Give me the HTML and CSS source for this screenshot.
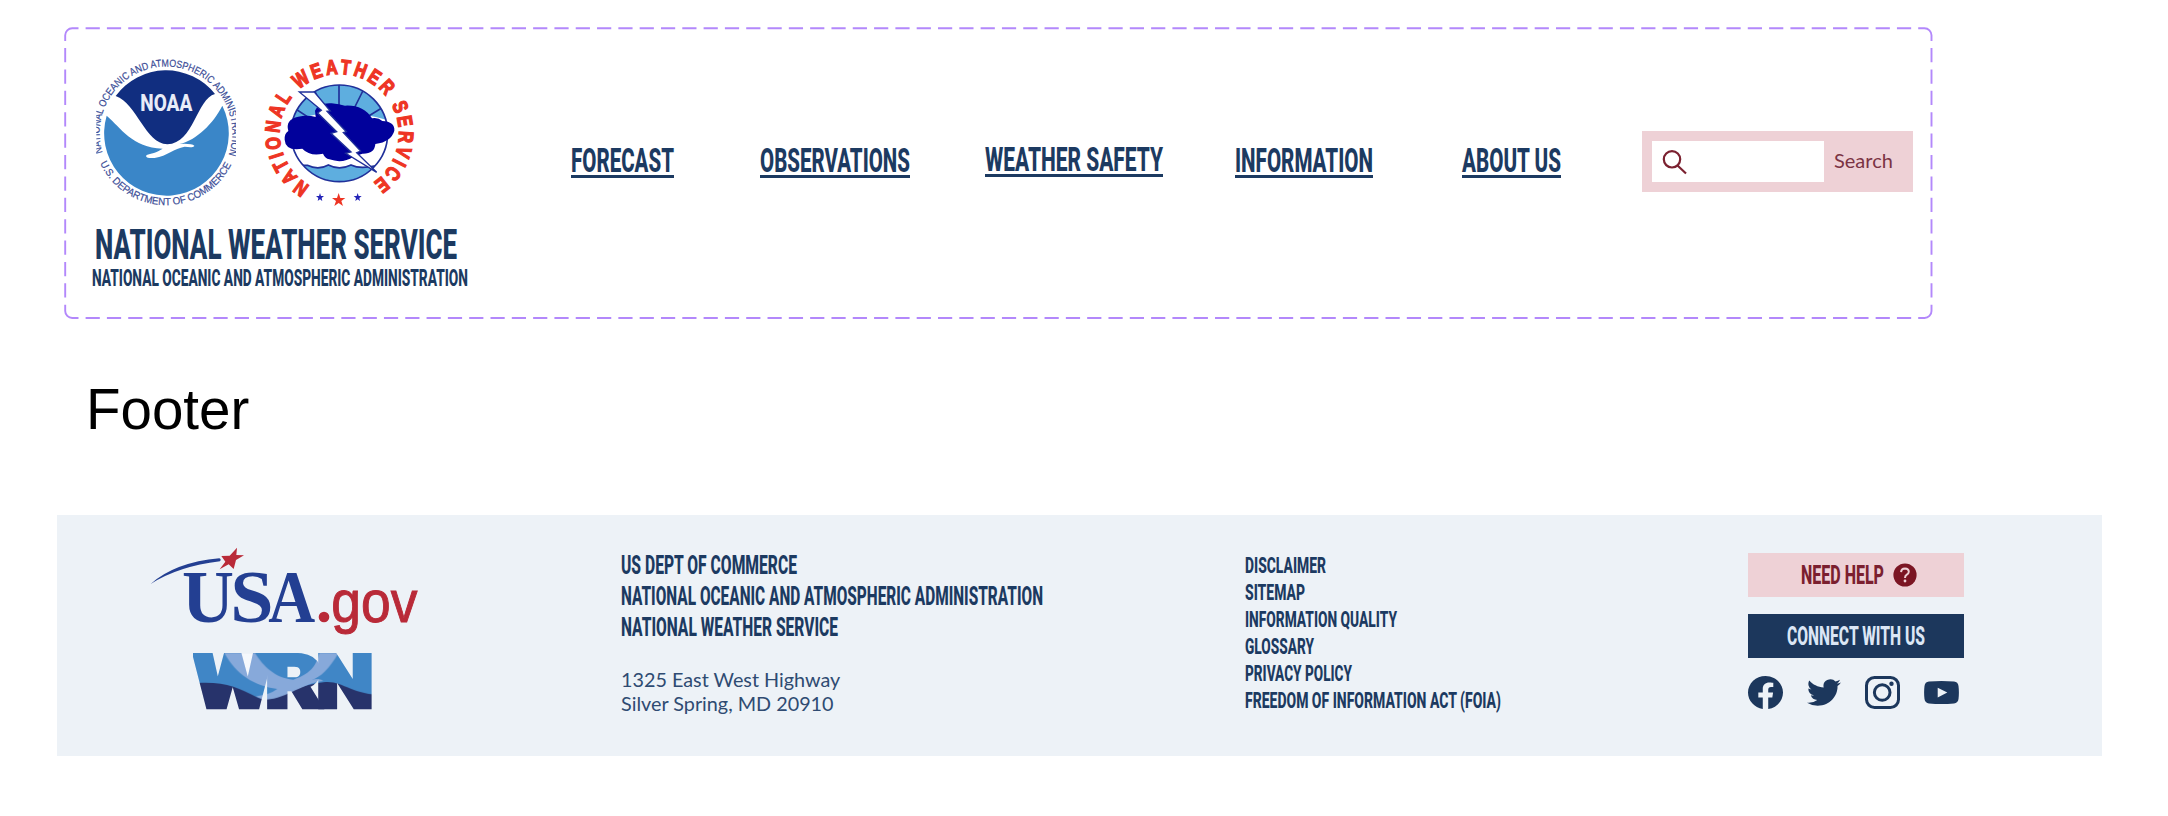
FILE: index.html
```html
<!DOCTYPE html>
<html lang="en">
<head>
<meta charset="utf-8">
<title>National Weather Service</title>
<link rel="stylesheet" href="styles.css">
</head>
<body>
<header class="header">
  <svg class="frame" width="1870" height="293" viewBox="63.5 27 1870 293" aria-hidden="true">
    <path d="M64.7 41V35.3a7 7 0 0 1 7-7H78M1917.7 28.3h6.3a7 7 0 0 1 7 7V41M1931 304.7v6.3a7 7 0 0 1-7 7h-6.3M78 318h-6.3a7 7 0 0 1-7-7v-6.3"/>
    <path stroke-dasharray="14.21 7.1" d="M85.1 28.3H1910.7M85.1 318H1910.7"/>
    <path stroke-dasharray="14.25 7.13" d="M64.7 48.1V297.6M1931 48.1V297.6"/>
  </svg>
  <div class="brand">
    <div class="logos">
      <svg class="noaa" width="146" height="154" viewBox="132 108 438 462" role="img" aria-label="NOAA">
        <defs>
          <path id="noaaTop" d="M158 398A199 199 0 1 1 538 398"/>
          <path id="noaaBottom" d="M150 430A219 219 0 0 0 546 430"/>
          <clipPath id="noaaClip"><rect x="139" y="100" width="419" height="480"/></clipPath>
        </defs>
        <path fill="#112e80" d="M197 228A187 187 0 0 1 495 222C440 236 432 370 352 373C285 370 262 252 197 228Z"/>
        <path fill="#3a86c8" d="M170 287C215 325 245 382 338 386C320 398 302 401 290 405C284 412 294 415 314 414C352 408 372 385 404 380Q432 384 433 377Q425 370 389 372C440 360 490 310 517 257A187 187 0 1 1 170 287Z"/>
        <text class="noaa-name" x="271" y="272" textLength="156" lengthAdjust="spacingAndGlyphs">NOAA</text>
        <g class="noaa-ring" clip-path="url(#noaaClip)">
          <text><textPath href="#noaaTop" textLength="752" lengthAdjust="spacingAndGlyphs">NATIONAL OCEANIC AND ATMOSPHERIC ADMINISTRATION</textPath></text>
          <text><textPath href="#noaaBottom" textLength="490" lengthAdjust="spacingAndGlyphs">U.S. DEPARTMENT OF COMMERCE</textPath></text>
        </g>
      </svg>
      <svg class="nws" width="156" height="154" viewBox="36 48 468 462" role="img" aria-label="National Weather Service">
        <defs>
          <path id="nwsRing" d="M180 437A179 179 0 1 1 356 437"/>
          <clipPath id="nwsDisc"><circle cx="268" cy="280" r="145"/></clipPath>
        </defs>
        <circle cx="268" cy="280" r="145" fill="#fff"/>
        <g clip-path="url(#nwsDisc)" stroke="#20309a" stroke-width="5">
          <path fill="#5eaedf" d="M110 130H430V243H110Z" stroke="none"/>
          <path fill="none" d="M267 130V210M340 150L310 210M394 205L350 232M195 155L220 210M137 207L180 235"/>
          <path fill="#fff" d="M110 246Q268 190 430 246V400H110Z" stroke="none"/>
          <path fill="#5eaedf" d="M140 376Q160 376 172 376Q205 392 235 375Q268 392 303 375Q330 388 372 378L430 376V440H110Z"/>
        </g>
        <circle cx="268" cy="280" r="145" fill="none" stroke="#20309a" stroke-width="5"/>
        <path fill="#01019b" d="M195 212Q202 188 245 190Q268 193 285 197Q340 194 366 235Q385 232 397 243Q435 245 433 272Q424 305 376 312Q374 342 337 341Q324 345 310 350Q278 372 238 358Q225 355 219 341Q180 350 157 326Q106 334 104 299Q103 280 115 273Q105 238 145 230Q172 224 197 231Z"/>
        <path fill="#fff" stroke="#20309a" stroke-width="4" d="M148 156H193L241 213L231 214L289 275L280 278L332 333L320 338L380 397L287 340L303 336L243 280L260 275L203 219L214 211Z"/>
        <text class="nws-ring"><textPath href="#nwsRing" textLength="932" lengthAdjust="spacingAndGlyphs">NATIONAL WEATHER SERVICE</textPath></text>
        <path fill="#ee3524" d="M266 459L271 474L286 474L274 483L279 498L266 489L253 498L258 483L246 474L261 474Z"/>
        <path fill="#2424b8" d="M210 459L213 468L222 468L215 474L217 483L210 478L203 483L205 474L198 468L207 468ZM323 459L326 468L335 468L328 474L330 483L323 478L316 483L318 474L311 468L320 468Z"/>
      </svg>
    </div>
    <svg class="cond title" width="364" height="35"><text x="3" y="34" textLength="362" lengthAdjust="spacingAndGlyphs">NATIONAL WEATHER SERVICE</text></svg>
    <svg class="cond subtitle" width="377" height="27"><text y="26" textLength="376" lengthAdjust="spacingAndGlyphs">NATIONAL OCEANIC AND ATMOSPHERIC ADMINISTRATION</text></svg>
  </div>
  <nav class="nav">
    <a><svg class="cond" width="103" height="24"><text y="24" textLength="103" lengthAdjust="spacingAndGlyphs">FORECAST</text></svg></a>
    <a><svg class="cond" width="150" height="24"><text y="24" textLength="150" lengthAdjust="spacingAndGlyphs">OBSERVATIONS</text></svg></a>
    <a class="raised"><svg class="cond" width="178" height="24"><text y="24" textLength="178" lengthAdjust="spacingAndGlyphs">WEATHER SAFETY</text></svg></a>
    <a><svg class="cond" width="138" height="24"><text y="24" textLength="138" lengthAdjust="spacingAndGlyphs">INFORMATION</text></svg></a>
    <a><svg class="cond" width="99" height="24"><text y="24" textLength="99" lengthAdjust="spacingAndGlyphs">ABOUT US</text></svg></a>
  </nav>
  <div class="search">
    <div class="field"><svg width="26" height="25" viewBox="0 0 26 25" fill="none" stroke="#7b2130" stroke-width="2.2"><circle cx="10" cy="9.3" r="8.2"/><path d="M15.5 15.5L24 23.5"/></svg></div>
    <span>Search</span>
  </div>
</header>

<h1 class="heading">Footer</h1>

<footer class="footer">
  <div class="partners">
    <svg width="268" height="90" viewBox="330 142 804 270" role="img" aria-label="USA.gov">
      <path fill="#233f92" d="M332 253Q405 188 538 176Q545 179 540 185Q415 200 332 253Z"/>
      <path fill="#b92a38" d="M591 144L589 166L612 167L588 181L581 208L566 194L539 209L556 186L544 169L569 168Z"/>
      <g class="usa"><text x="426" y="367" textLength="156" lengthAdjust="spacingAndGlyphs">U</text><text x="571" y="367" textLength="130" lengthAdjust="spacingAndGlyphs">S</text><text x="685" y="367" textLength="141" lengthAdjust="spacingAndGlyphs">A</text></g>
      <circle cx="852" cy="352" r="16" fill="#b92a38"/>
      <text class="gov" x="874" y="366" textLength="258" lengthAdjust="spacingAndGlyphs">gov</text>
    </svg>
    <svg class="wrn" width="180" height="57" viewBox="459 460 540 171" role="img" aria-label="WRN">
      <defs>
        <pattern id="wave" patternUnits="userSpaceOnUse" x="440" y="440" width="600" height="220" viewBox="440 440 600 220">
          <path fill="#4086c6" d="M440 440H1040V660H440Z"/>
          <path fill="#27336b" d="M440 553C540 540 590 560 650 592C690 612 750 560 850 548C910 540 930 588 1040 586V660H440Z"/>
          <path fill="#87a9da" d="M553 460H645C670 500 705 535 760 540C820 520 830 490 838 460H895C870 505 840 535 815 540Q840 535 850 544C790 550 740 595 680 600Q660 598 648 590Q690 585 712 568C640 558 590 525 553 460Z"/>
        </pattern>
      </defs>
      <path fill="#f5f8fc" d="M606 462H648L628 555Z"/>
      <g class="wrn-text"><text x="463" y="622" textLength="232" lengthAdjust="spacingAndGlyphs">W</text><text x="675" y="622" textLength="172" lengthAdjust="spacingAndGlyphs">R</text><text x="829" y="622" textLength="172" lengthAdjust="spacingAndGlyphs">N</text></g>
    </svg>
  </div>
  <div class="org">
    <svg class="cond" width="176" height="31"><text y="22" textLength="176" lengthAdjust="spacingAndGlyphs">US DEPT OF COMMERCE</text></svg>
    <svg class="cond" width="423" height="31"><text y="22" textLength="422" lengthAdjust="spacingAndGlyphs">NATIONAL OCEANIC AND ATMOSPHERIC ADMINISTRATION</text></svg>
    <svg class="cond" width="218" height="31"><text y="22" textLength="217" lengthAdjust="spacingAndGlyphs">NATIONAL WEATHER SERVICE</text></svg>
    <address>1325 East West Highway<br>Silver Spring, MD 20910</address>
  </div>
  <div class="links">
    <svg class="cond" width="82" height="27"><text y="20" textLength="81" lengthAdjust="spacingAndGlyphs">DISCLAIMER</text></svg>
    <svg class="cond" width="60" height="27"><text y="20" textLength="60" lengthAdjust="spacingAndGlyphs">SITEMAP</text></svg>
    <svg class="cond" width="152" height="27"><text y="20" textLength="152" lengthAdjust="spacingAndGlyphs">INFORMATION QUALITY</text></svg>
    <svg class="cond" width="70" height="27"><text y="20" textLength="69" lengthAdjust="spacingAndGlyphs">GLOSSARY</text></svg>
    <svg class="cond" width="108" height="27"><text y="20" textLength="107" lengthAdjust="spacingAndGlyphs">PRIVACY POLICY</text></svg>
    <svg class="cond" width="257" height="27"><text y="20" textLength="256" lengthAdjust="spacingAndGlyphs">FREEDOM OF INFORMATION ACT (FOIA)</text></svg>
  </div>
  <div class="contact">
    <div class="button help">
      <svg class="cond" width="83" height="18"><text y="18" textLength="83" lengthAdjust="spacingAndGlyphs">NEED HELP</text></svg>
      <svg width="24" height="24" viewBox="0 0 24 24"><circle cx="12" cy="12" r="11.6" fill="#7b1523"/><path d="M8.1 9.1Q8.2 5.4 12 5.4Q15.8 5.5 15.8 8.8Q15.7 10.6 13.8 11.7Q12 12.8 12 15" fill="none" stroke="#eed1d6" stroke-width="2"/><circle cx="12" cy="18" r="1.4" fill="#eed1d6"/></svg>
    </div>
    <div class="button connect"><svg class="cond" width="138" height="18"><text y="18" textLength="138" lengthAdjust="spacingAndGlyphs">CONNECT WITH US</text></svg></div>
    <div class="social">
      <svg width="35" height="33" viewBox="0 0 24 24" preserveAspectRatio="none"><path d="M24 12.07C24 5.4 18.63 0 12 0S0 5.4 0 12.07C0 18.1 4.39 23.1 10.13 24v-8.44H7.08v-3.49h3.05V9.41c0-3.02 1.79-4.69 4.53-4.69 1.31 0 2.68.24 2.68.24v2.97h-1.51c-1.49 0-1.96.93-1.96 1.89v2.25h3.33l-.53 3.49h-2.8V24C19.61 23.1 24 18.1 24 12.07z"/></svg>
      <svg width="34" height="27" viewBox="0 2 24 20" preserveAspectRatio="none"><path d="M23.95 4.57a10 10 0 0 1-2.82.77 4.96 4.96 0 0 0 2.16-2.72c-.95.55-2 .95-3.13 1.18a4.92 4.92 0 0 0-8.38 4.48C7.69 8.09 4.07 6.13 1.64 3.16a4.9 4.9 0 0 0 1.52 6.57 4.9 4.9 0 0 1-2.23-.61v.06a4.92 4.92 0 0 0 3.95 4.83 5 5 0 0 1-2.21.08 4.94 4.94 0 0 0 4.6 3.42A9.87 9.87 0 0 1 0 19.54a14 14 0 0 0 7.55 2.21c9.05 0 14-7.5 14-13.98 0-.21 0-.42-.02-.63a9.9 9.9 0 0 0 2.42-2.57z"/></svg>
      <svg width="35" height="33" viewBox="0 0 35 33" fill="none" stroke="#1c375c" stroke-width="3"><rect x="1.5" y="1.5" width="32" height="30" rx="8"/><circle cx="17.2" cy="16.5" r="7.8"/><circle cx="26.5" cy="7.7" r="2.2" fill="#1c375c" stroke="none"/></svg>
      <svg width="35" height="23" viewBox="0 0 35 23"><path fill-rule="evenodd" d="M5 .6Q17.500-.5 30 .6Q34 1 34.500 5Q35.300 11.500 34.500 18Q34 22 30 22.400Q17.500 23.500 5 22.400Q1 22 .5 18Q-.3 11.500 .5 5Q1 1 5 .6ZM13.700 6.700V16.500L23.300 11.600Z"/></svg>
    </div>
  </div>
</footer>
</body>
</html>
```
FILE: styles.css
```css
* { box-sizing: border-box; }
body { margin: 0; padding: 27px 66px 0 57px; background: #fff; font-family: Lato, sans-serif; color: #1c375c; }
svg { display: block; flex: none; }

/* condensed display lettering */
.cond { overflow: visible; fill: #1c3a61; font-family: "Liberation Sans Narrow", Roboto, sans-serif; font-weight: 800; font-size: 33.7px; }

.header { position: relative; display: flex; width: 1868px; height: 292px; margin-left: 7px; padding: 29px 19px 0 28px; }
.frame { position: absolute; left: 0; top: 0; fill: none; stroke: #b388fb; stroke-width: 1.9; }
.brand { width: 377px; }
.logos { display: flex; gap: 22px; height: 169px; }
.noaa { margin-left: 2px; }
.noaa-name { font: 800 70px Roboto, sans-serif; fill: #e8ecf8; }
.noaa-ring { font: 31px "Liberation Sans", sans-serif; fill: #3a4c96; stroke: #3a4c96; stroke-width: .6; }
.nws { overflow: visible; }
.nws-ring { font: 700 62px "Liberation Sans", sans-serif; letter-spacing: 11px; fill: #ee3524; stroke: #ee3524; stroke-width: 4; }
.title { font-size: 42.2px; }
.subtitle { font-size: 23.2px; }

.nav { display: flex; margin: 92px 0 0 102px; }
.nav a { height: 30px; border-bottom: 3px solid #1c3a61; }
.nav a:nth-child(2) { margin-left: 86px; }
.nav a:nth-child(3) { margin-left: 75px; }
.nav a:nth-child(4) { margin-left: 72px; }
.nav a:nth-child(5) { margin-left: 89px; }
.nav .raised { margin-top: -1px; }

.search { display: flex; align-items: center; width: 271px; height: 61px; margin: 75px 0 0 81px; padding: 0 0 0 10px; background: #eed1d6; font-size: 20px; color: #7b3344; }
.field { width: 172px; height: 41px; padding: 9px 0 0 10px; background: #fff; }
.search span { margin: -3px 0 0 10px; }

.heading { margin: 58px 0 0 29px; height: 138px; font: 400 56.5px/66px "Liberation Sans", sans-serif; color: #000; }

.footer { display: flex; width: 2045px; height: 241px; background: #edf2f7; }
.partners { width: 564px; padding: 32px 0 0 93px; }
.wrn { margin: 16px 0 0 43px; }
.usa { font: 700 222px "Liberation Serif", serif; fill: #233f92; }
.gov { font: 178px "Liberation Sans", sans-serif; fill: #b92a38; stroke: #b92a38; stroke-width: 3; }
.wrn-text { font: 900 217px Roboto, sans-serif; fill: url(#wave); stroke: url(#wave); stroke-width: 13; }

.org { width: 624px; padding-top: 37px; }
.org .cond { font-size: 26px; }
address { margin-top: 22px; font: 19.8px/24px Lato, sans-serif; color: #2f4b72; }
.links { width: 503px; padding-top: 38px; }
.links .cond { font-size: 22.5px; }

.contact { width: 216px; padding-top: 38px; }
.button { display: flex; align-items: center; justify-content: center; height: 44px; }
.button .cond { font-size: 25.4px; }
.help { gap: 9px; padding-left: 5px; background: #eed1d6; }
.help .cond { fill: #7b1f2f; }
.connect { margin-top: 17px; background: #1c375c; }
.connect .cond { fill: #dbe6f5; }
.social { display: flex; align-items: center; justify-content: space-between; width: 211px; height: 33px; margin-top: 18px; fill: #1c375c; }
```
